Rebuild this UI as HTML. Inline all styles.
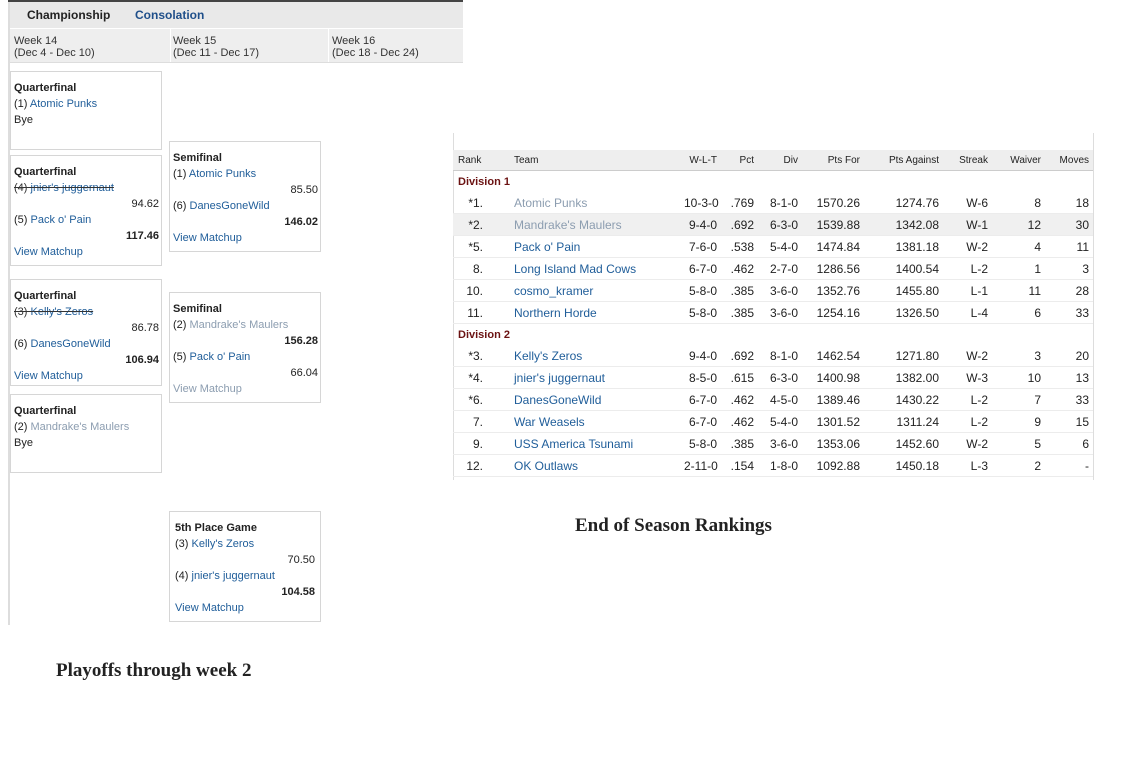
<!DOCTYPE html><html><head><style>
body{margin:0;width:1131px;height:763px;background:#fff;font-family:"Liberation Sans",Arial,sans-serif;font-size:11px;color:#222;position:relative;overflow:hidden}
.a{position:absolute}
.box{position:absolute;border:1px solid #d6d6d6;background:#fff;padding:8px 2px 0 3px;box-sizing:border-box;line-height:16px}
.box b{display:block}
.r{text-align:right}
.l{color:#1f5d99}.g{color:#8c9db0}
s{color:#333}
table{position:absolute;left:453px;top:150px;width:640px;border-collapse:collapse;font-size:12px;table-layout:fixed}
td,th{padding:0 4px;height:21px;text-align:right;border-bottom:1px solid #ececec;white-space:nowrap;overflow:hidden}
th{font-weight:normal;font-size:10px;background:#eee;height:20px;border-bottom:1px solid #ccc}
td.t,th.t{text-align:left;padding-left:9px}
td.k{padding-right:22px}
th.k{text-align:left;padding-left:5px}
tr.d td{color:#6b1212;font-weight:bold;text-align:left;font-size:11px;border:none;padding-left:5px}
</style></head><body>
<div class="a" style="left:8px;top:0;width:2px;height:625px;background:#ddd"></div>
<div class="a" style="left:8px;top:0;width:455px;height:2px;background:#444"></div>
<div class="a" style="left:10px;top:2px;width:453px;height:26px;background:#e9e9e9"></div>
<div class="a" style="left:27px;top:8px;font-size:12px;font-weight:bold">Championship</div>
<div class="a" style="left:135px;top:8px;font-size:12px;font-weight:bold;color:#1f4f8a">Consolation</div>
<div class="a" style="left:10px;top:29px;width:453px;height:33px;background:#eee;border-bottom:1px solid #ddd"></div>
<div class="a" style="left:170px;top:29px;width:1px;height:33px;background:#fff"></div>
<div class="a" style="left:328px;top:29px;width:1px;height:33px;background:#fff"></div>
<div class="a" style="left:14px;top:35px;font-size:11px;line-height:12px;color:#333">Week 14<br>(Dec 4 - Dec 10)</div>
<div class="a" style="left:173px;top:35px;font-size:11px;line-height:12px;color:#333">Week 15<br>(Dec 11 - Dec 17)</div>
<div class="a" style="left:332px;top:35px;font-size:11px;line-height:12px;color:#333">Week 16<br>(Dec 18 - Dec 24)</div>

<div class="box" style="left:10px;top:71px;width:152px;height:79px"><b>Quarterfinal</b><div>(1) <span class="l">Atomic Punks</span></div><div>Bye</div></div>
<div class="box" style="left:10px;top:155px;width:152px;height:111px"><b>Quarterfinal</b><div><s>(4) <span class="l">jnier's juggernaut</span></s></div><div class="r">94.62</div><div>(5) <span class="l">Pack o' Pain</span></div><div class="r"><b>117.46</b></div><div class="l">View Matchup</div></div>
<div class="box" style="left:10px;top:279px;width:152px;height:107px"><b>Quarterfinal</b><div><s>(3) <span class="l">Kelly's Zeros</span></s></div><div class="r">86.78</div><div>(6) <span class="l">DanesGoneWild</span></div><div class="r"><b>106.94</b></div><div class="l">View Matchup</div></div>
<div class="box" style="left:10px;top:394px;width:152px;height:79px"><b>Quarterfinal</b><div>(2) <span class="g">Mandrake's Maulers</span></div><div>Bye</div></div>
<div class="box" style="left:169px;top:141px;width:152px;height:111px"><b>Semifinal</b><div>(1) <span class="l">Atomic Punks</span></div><div class="r">85.50</div><div>(6) <span class="l">DanesGoneWild</span></div><div class="r"><b>146.02</b></div><div class="l">View Matchup</div></div>
<div class="box" style="left:169px;top:292px;width:152px;height:111px"><b>Semifinal</b><div>(2) <span class="g">Mandrake's Maulers</span></div><div class="r"><b>156.28</b></div><div>(5) <span class="l">Pack o' Pain</span></div><div class="r">66.04</div><div class="g">View Matchup</div></div>
<div class="box" style="left:169px;top:511px;width:152px;height:111px;padding-left:5px;padding-right:5px"><b>5th Place Game</b><div>(3) <span class="l">Kelly's Zeros</span></div><div class="r">70.50</div><div>(4) <span class="l">jnier's juggernaut</span></div><div class="r"><b>104.58</b></div><div class="l">View Matchup</div></div>

<div class="a" style="left:56px;top:660px;font-family:'Liberation Serif',serif;font-weight:bold;font-size:19px;line-height:22px">Playoffs through week 2</div>
<div class="a" style="left:575px;top:515px;font-family:'Liberation Serif',serif;font-weight:bold;font-size:19px;line-height:22px">End of Season Rankings</div>

<div class="a" style="left:453px;top:133px;width:1px;height:347px;background:#ddd"></div>
<div class="a" style="left:1093px;top:133px;width:1px;height:347px;background:#ddd"></div>
<table>
<colgroup><col style="width:52px"><col style="width:175px"><col style="width:41px"><col style="width:37px"><col style="width:44px"><col style="width:62px"><col style="width:79px"><col style="width:49px"><col style="width:53px"><col style="width:48px"></colgroup>
<tr><th class="k">Rank</th><th class="t">Team</th><th>W-L-T</th><th>Pct</th><th>Div</th><th>Pts For</th><th>Pts Against</th><th>Streak</th><th>Waiver</th><th>Moves</th></tr>
<tr class="d"><td colspan="10">Division 1</td></tr>
<tr><td class="k">*1.</td><td class="t g">Atomic Punks</td><td>10-3-0</td><td>.769</td><td>8-1-0</td><td>1570.26</td><td>1274.76</td><td>W-6</td><td>8</td><td>18</td></tr>
<tr style="background:#f0f0f0"><td class="k">*2.</td><td class="t g">Mandrake's Maulers</td><td>9-4-0</td><td>.692</td><td>6-3-0</td><td>1539.88</td><td>1342.08</td><td>W-1</td><td>12</td><td>30</td></tr>
<tr><td class="k">*5.</td><td class="t l">Pack o' Pain</td><td>7-6-0</td><td>.538</td><td>5-4-0</td><td>1474.84</td><td>1381.18</td><td>W-2</td><td>4</td><td>11</td></tr>
<tr><td class="k">8.</td><td class="t l">Long Island Mad Cows</td><td>6-7-0</td><td>.462</td><td>2-7-0</td><td>1286.56</td><td>1400.54</td><td>L-2</td><td>1</td><td>3</td></tr>
<tr><td class="k">10.</td><td class="t l">cosmo_kramer</td><td>5-8-0</td><td>.385</td><td>3-6-0</td><td>1352.76</td><td>1455.80</td><td>L-1</td><td>11</td><td>28</td></tr>
<tr><td class="k">11.</td><td class="t l">Northern Horde</td><td>5-8-0</td><td>.385</td><td>3-6-0</td><td>1254.16</td><td>1326.50</td><td>L-4</td><td>6</td><td>33</td></tr>
<tr class="d"><td colspan="10">Division 2</td></tr>
<tr><td class="k">*3.</td><td class="t l">Kelly's Zeros</td><td>9-4-0</td><td>.692</td><td>8-1-0</td><td>1462.54</td><td>1271.80</td><td>W-2</td><td>3</td><td>20</td></tr>
<tr><td class="k">*4.</td><td class="t l">jnier's juggernaut</td><td>8-5-0</td><td>.615</td><td>6-3-0</td><td>1400.98</td><td>1382.00</td><td>W-3</td><td>10</td><td>13</td></tr>
<tr><td class="k">*6.</td><td class="t l">DanesGoneWild</td><td>6-7-0</td><td>.462</td><td>4-5-0</td><td>1389.46</td><td>1430.22</td><td>L-2</td><td>7</td><td>33</td></tr>
<tr><td class="k">7.</td><td class="t l">War Weasels</td><td>6-7-0</td><td>.462</td><td>5-4-0</td><td>1301.52</td><td>1311.24</td><td>L-2</td><td>9</td><td>15</td></tr>
<tr><td class="k">9.</td><td class="t l">USS America Tsunami</td><td>5-8-0</td><td>.385</td><td>3-6-0</td><td>1353.06</td><td>1452.60</td><td>W-2</td><td>5</td><td>6</td></tr>
<tr><td class="k">12.</td><td class="t l">OK Outlaws</td><td>2-11-0</td><td>.154</td><td>1-8-0</td><td>1092.88</td><td>1450.18</td><td>L-3</td><td>2</td><td>-</td></tr>
</table>
</body></html>
